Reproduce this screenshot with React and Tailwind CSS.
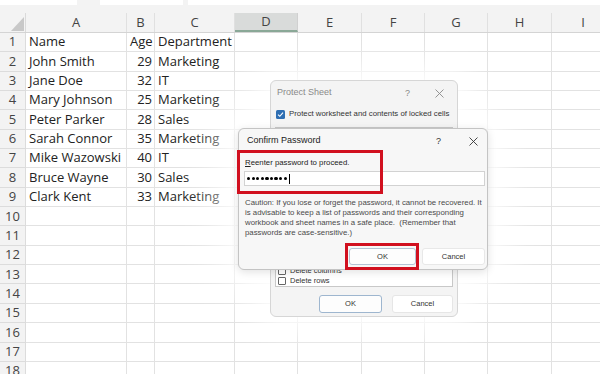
import React from "react";

const COLS = [
  { l: "A", w: 101 },
  { l: "B", w: 28 },
  { l: "C", w: 80 },
  { l: "D", w: 63 },
  { l: "E", w: 64 },
  { l: "F", w: 63 },
  { l: "G", w: 63 },
  { l: "H", w: 64 },
  { l: "I", w: 63 },
];

const DATA = [
  ["Name", "Age", "Department"],
  ["John Smith", 29, "Marketing"],
  ["Jane Doe", 32, "IT"],
  ["Mary Johnson", 25, "Marketing"],
  ["Peter Parker", 28, "Sales"],
  ["Sarah Connor", 35, "Marketing"],
  ["Mike Wazowski", 40, "IT"],
  ["Bruce Wayne", 30, "Sales"],
  ["Clark Kent", 33, "Marketing"],
];

function XIcon({ className = "" }) {
  return (
    <svg width="9" height="9" viewBox="0 0 9 9" className={className}>
      <path d="M0.5 0.5 L8.5 8.5 M8.5 0.5 L0.5 8.5" stroke="currentColor" strokeWidth="0.9" fill="none" />
    </svg>
  );
}

function Check() {
  return (
    <svg width="9" height="9" viewBox="0 0 9 9">
      <rect x="0" y="0" width="9" height="9" rx="1.5" fill="#2f6fb3" />
      <path d="M2 4.6 L3.8 6.3 L7 2.6" stroke="#fff" strokeWidth="1.1" fill="none" />
    </svg>
  );
}

export default function App() {
  const rows = Array.from({ length: 18 }, (_, i) => i + 1);
  return (
    <div className="relative w-[600px] h-[374px] overflow-hidden bg-white">
      {/* top formula area */}
      <div className="h-[13px] bg-[#f3f3f3] flex items-start">
        <div className="w-[77px] h-[5px] bg-white" />
        <div className="w-[23px]" />
        <div className="w-[83px] h-[5px] bg-white" />
        <div className="w-[5px]" />
        <div className="flex-1 h-[5px] bg-white" />
      </div>

      {/* column headers */}
      <div className="flex h-[20px] bg-[#f3f3f3] border-b border-[#d4d4d4] font-['Open_Sans',sans-serif] text-[13px] text-[#444]">
        <div className="w-[26px] shrink-0 relative border-r border-[#dadada]">
          <svg width="26" height="20" viewBox="0 0 26 20" className="absolute left-0 top-0">
            <polygon points="24,4 24,18 11,18" fill="#c8c8c8" />
          </svg>
        </div>
        {COLS.map((c) => (
          <div
            key={c.l}
            className={
              c.l === "D"
                ? "shrink-0 flex items-center justify-center border-r border-[#d0d0d0] bg-[#d9dbda] border-b-2 border-b-[#8aa897]"
                : "shrink-0 flex items-center justify-center border-r border-[#e0e0e0]"
            }
            style={{ width: c.w }}
          >
            {c.l}
          </div>
        ))}
      </div>

      {/* rows */}
      <div className="flex flex-col font-['Open_Sans',sans-serif] text-[13px]">
        {rows.map((r) => {
          const d = DATA[r - 1];
          return (
            <div key={r} className="flex h-[19.35px] shrink-0">
              <div className="w-[26px] shrink-0 flex items-center justify-center bg-[#f3f3f3] border-r border-b border-[#dcdcdc] text-[#444]">
                {r}
              </div>
              {COLS.map((c, ci) => {
                const v = d ? d[ci] : undefined;
                const isNum = typeof v === "number";
                return (
                  <div
                    key={c.l}
                    className={
                      "shrink-0 flex items-center border-r border-b border-[#e2e2e2] text-[#222] whitespace-nowrap overflow-visible " +
                      (isNum ? "justify-end pr-[2px]" : "pl-[3px]")
                    }
                    style={{ width: c.w }}
                  >
                    {v}
                  </div>
                );
              })}
            </div>
          );
        })}
      </div>

      {/* white glows (beneath the dialogs) */}
      <div className="absolute left-[270px] top-[80px] w-[188px] h-[237px] rounded-[6px] shadow-[0_0_30px_14px_rgba(255,255,255,0.9)]" />
      <div className="absolute left-[238px] top-[128px] w-[250px] h-[142px] rounded-[6px] shadow-[0_0_40px_18px_rgba(255,255,255,0.92)]" />

      {/* Protect Sheet dialog (background) */}
      <div className="absolute left-[270px] top-[80px] w-[188px] h-[237px] flex flex-col bg-[#f4f4f4] border border-[#d6d6d6] rounded-[6px] font-['Liberation_Sans',sans-serif]">
        <div className="h-[24px] shrink-0 flex items-center pl-[6px] text-[9px] text-[#8a8a8a] relative">
          <span>Protect Sheet</span>
          <span className="absolute left-[134px] top-[6px] text-[9px] text-[#888]">?</span>
          <XIcon className="absolute left-[164px] top-[8px] text-[#8a8a8a]" />
        </div>
        <div className="mt-[4px] h-[10px] flex items-center pl-[5px] gap-[4px] text-[7.8px] text-[#333] whitespace-nowrap">
          <Check />
          <span>Protect worksheet and contents of locked cells</span>
        </div>
        <div className="flex-1 mx-[4px] mt-[8px] border border-[#c8c8c8] bg-white flex flex-col justify-end text-[7.5px] text-[#333]">
          <div className="h-[10px] flex items-center gap-[4px] pl-[2px]">
            <span className="w-[8px] h-[8px] border border-[#666] rounded-[1px] bg-white" />
            <span>Delete columns</span>
          </div>
          <div className="h-[10px] flex items-center gap-[4px] pl-[2px]">
            <span className="w-[8px] h-[8px] border border-[#666] rounded-[1px] bg-white" />
            <span>Delete rows</span>
          </div>
        </div>
        <div className="h-[18px] mt-[8px] mb-[3px] flex justify-end gap-[10px] pr-[4px] text-[7.5px] text-[#333]">
          <div className="w-[63px] flex items-center justify-center bg-[#fdfdfd] border border-[#9eb6cf] rounded-[3px]">OK</div>
          <div className="w-[61px] flex items-center justify-center bg-white border border-[#e6e6e6] rounded-[3px]">Cancel</div>
        </div>
      </div>

      {/* Confirm Password dialog */}
      <div className="absolute left-[238px] top-[128px] w-[250px] h-[142px] flex flex-col bg-[#f7f7f7] border border-[#c4c4c4] rounded-[6px] shadow-[0_2px_8px_rgba(0,0,0,0.12)] font-['Liberation_Sans',sans-serif]">
        <div className="h-[24px] shrink-0 flex items-center pl-[8px] text-[9px] text-[#222] relative">
          <span>Confirm Password</span>
          <span className="absolute left-[197px] top-[6px] text-[9px] text-[#333]">?</span>
          <XIcon className="absolute left-[230px] top-[8px] text-[#333]" />
        </div>
        <div className="mt-[5px] pl-[6px] text-[7.8px] text-[#222] leading-[10px]">
          <span className="underline">R</span>eenter password to proceed.
        </div>
        <div className="mt-[3px] ml-[5px] mr-[2px] h-[15px] bg-white border border-[#d2d2d2] flex items-center pl-[2px] gap-[1.4px]">
          {Array.from({ length: 9 }, (_, i) => (
            <span key={i} className="w-[3.2px] h-[3.2px] rounded-full bg-black" />
          ))}
          <span className="w-px h-[10px] bg-black ml-[1px]" />
        </div>
        <div className="mt-[12px] pl-[6px] text-[7.8px] leading-[10px] text-[#4a4a4a] whitespace-nowrap">
          Caution: If you lose or forget the password, it cannot be recovered. It
          <br />
          is advisable to keep a list of passwords and their corresponding
          <br />
          workbook and sheet names in a safe place.&nbsp; (Remember that
          <br />
          passwords are case-sensitive.)
        </div>
        <div className="flex-1" />
        <div className="h-[17px] mb-[4px] flex justify-end gap-[6px] pr-[2px] text-[7.5px] text-[#333]">
          <div className="w-[67px] flex items-center justify-center bg-[#fdfdfd] border border-[#b4c3d4] rounded-[3px]">OK</div>
          <div className="w-[63px] flex items-center justify-center bg-white border border-[#e8e8e8] rounded-[3px]">Cancel</div>
        </div>
      </div>

      {/* red highlight boxes */}
      <div className="absolute left-[237px] top-[150px] w-[146px] h-[44px] border-[3px] border-[#d1101f]" />
      <div className="absolute left-[345px] top-[243px] w-[74px] h-[27px] border-[3px] border-[#d1101f]" />
    </div>
  );
}
